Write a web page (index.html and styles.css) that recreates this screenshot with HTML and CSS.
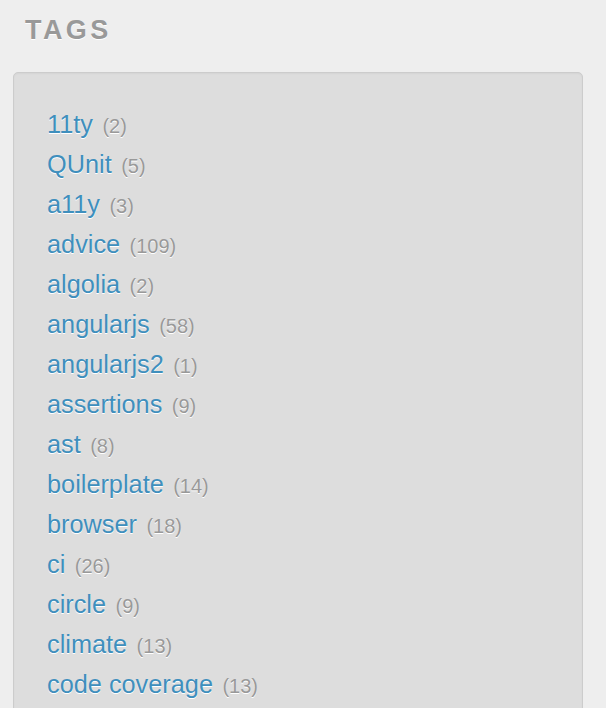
FILE: index.html
```html
<!DOCTYPE html>
<html>
<head>
<meta charset="utf-8">
<link rel="stylesheet" href="styles.css">
</head>
<body>
<div class="sidebar">
  <h2 class="heading">Tags</h2>
  <div class="panel">
    <ul class="tags">
      <li><a href="#">11ty</a> <span class="count">(2)</span></li>
      <li><a href="#">QUnit</a> <span class="count">(5)</span></li>
      <li><a href="#">a11y</a> <span class="count">(3)</span></li>
      <li><a href="#">advice</a> <span class="count">(109)</span></li>
      <li><a href="#">algolia</a> <span class="count">(2)</span></li>
      <li><a href="#">angularjs</a> <span class="count">(58)</span></li>
      <li><a href="#">angularjs2</a> <span class="count">(1)</span></li>
      <li><a href="#">assertions</a> <span class="count">(9)</span></li>
      <li><a href="#">ast</a> <span class="count">(8)</span></li>
      <li><a href="#">boilerplate</a> <span class="count">(14)</span></li>
      <li><a href="#">browser</a> <span class="count">(18)</span></li>
      <li><a href="#">ci</a> <span class="count">(26)</span></li>
      <li><a href="#">circle</a> <span class="count">(9)</span></li>
      <li><a href="#">climate</a> <span class="count">(13)</span></li>
      <li><a href="#">code coverage</a> <span class="count">(13)</span></li>
    </ul>
  </div>
</div>
</body>
</html>
```

FILE: styles.css
```css
html, body {
  margin: 0;
  padding: 0;
  background: #eeeeee;
  height: 100%;
  overflow: hidden;
}
body {
  font-family: "Liberation Sans", Arial, sans-serif;
}
.sidebar {
  padding: 14px 23px 0 13px;
}
.heading {
  margin: 0 0 26px 12px;
  font-size: 27px;
  line-height: 32px;
  font-weight: bold;
  text-transform: uppercase;
  letter-spacing: 3.4px;
  color: #999999;
  text-shadow: 0 1px 0 #ffffff;
}
.panel {
  background: #dddddd;
  border: 1px solid #cccccc;
  border-radius: 5px;
  padding: 31px 33px 40px;
  box-shadow: inset 0 1px 2px rgba(0,0,0,0.04);
}
.tags {
  list-style: none;
  margin: 0;
  padding: 0;
}
.tags li {
  line-height: 40px;
  height: 40px;
  white-space: nowrap;
}
.tags a {
  color: #3f8fbd;
  text-decoration: none;
  font-size: 25.3px;
  text-shadow: 0 1px 0 #ffffff;
}
.count {
  color: #999999;
  font-size: 20px;
  margin-left: 5px;
  text-shadow: 0 1px 0 #ffffff;
}
```
